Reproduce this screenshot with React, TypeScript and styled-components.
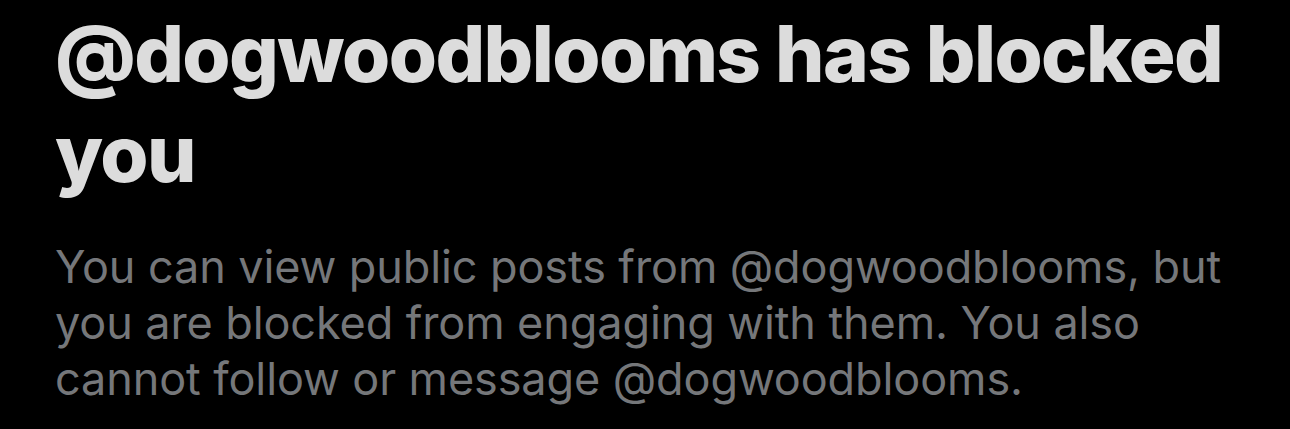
import React from 'react'
import styled, { createGlobalStyle } from 'styled-components'

const Global = createGlobalStyle`
  html, body {
    margin: 0;
    padding: 0;
    background: #000;
  }
`

const Screen = styled.div`
  width: 1290px;
  height: 429px;
  background: #000;
  padding: 0 0 0 55px;
  box-sizing: border-box;
  overflow: hidden;
  font-family: Inter, 'Liberation Sans', Arial, sans-serif;
`

const Title = styled.h1`
  margin: 0;
  padding-top: 4px;
  font-size: 78px;
  line-height: 100px;
  font-weight: 800;
  color: #dcdcdc;
  letter-spacing: -1.6px;
`

const Body = styled.p`
  margin: 35px 0 0;
  font-size: 45px;
  line-height: 56px;
  font-weight: 400;
  color: #75777a;
  letter-spacing: -0.1px;
`

const Line = styled.span`
  display: block;
  white-space: nowrap;
`

export default function App() {
  return (
    <>
      <Global />
      <Screen>
        <Title>
          <Line>@dogwoodblooms has blocked</Line>
          <Line>you</Line>
        </Title>
        <Body>
          <Line>You can view public posts from @dogwoodblooms, but</Line>
          <Line>you are blocked from engaging with them. You also</Line>
          <Line>cannot follow or message @dogwoodblooms.</Line>
        </Body>
      </Screen>
    </>
  )
}
